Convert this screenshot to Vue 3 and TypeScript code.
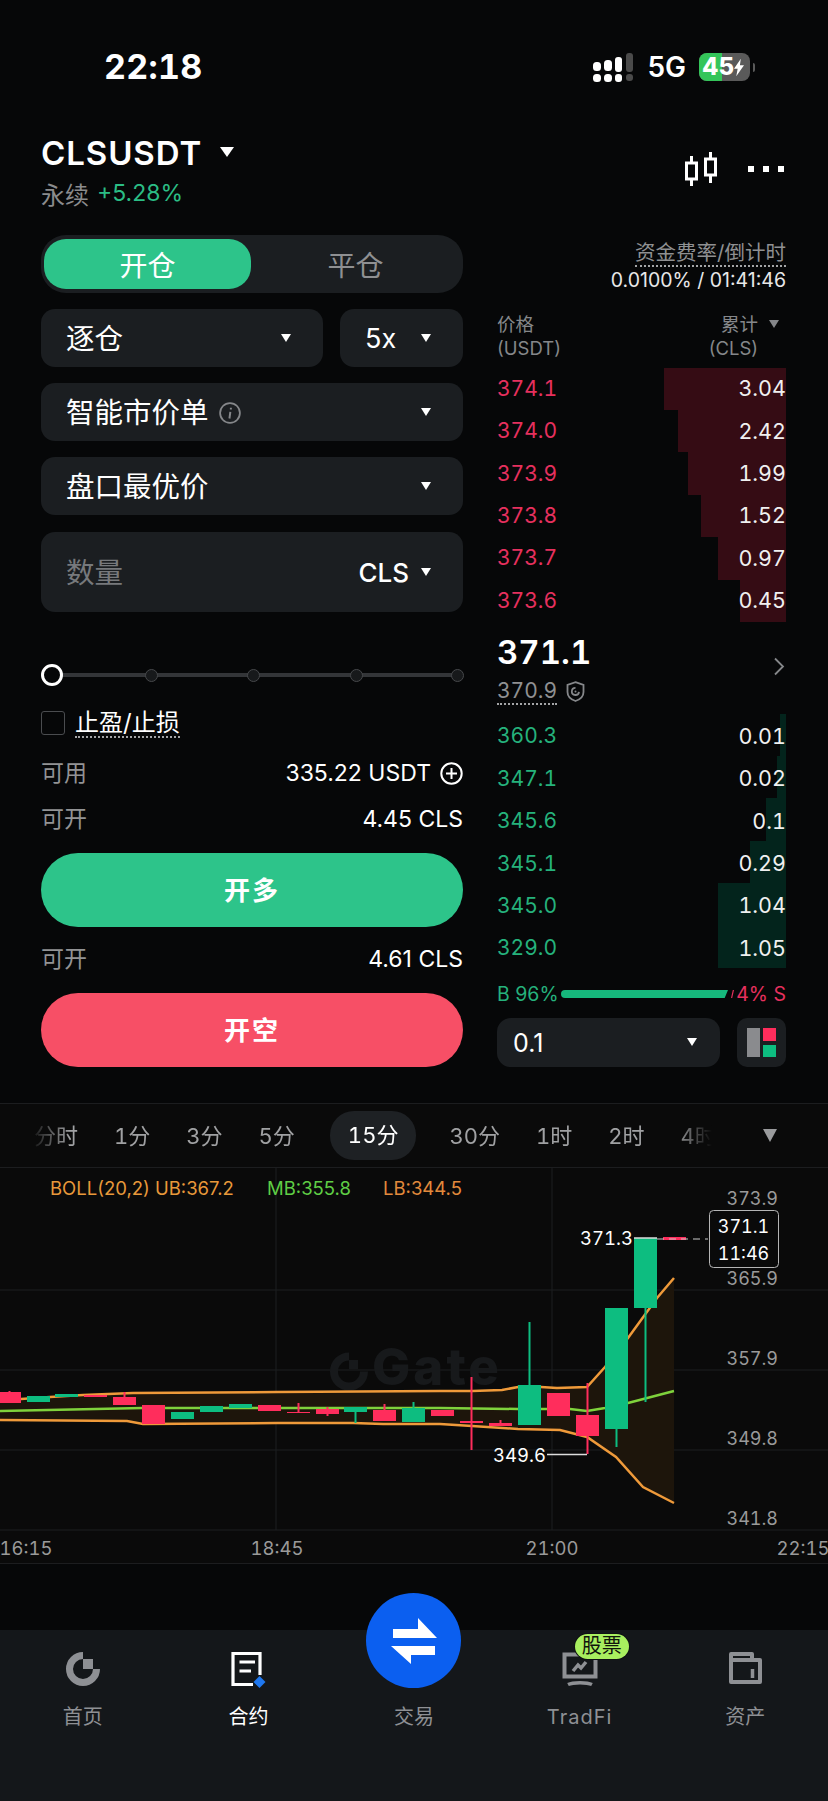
<script setup lang="ts">
interface Level { price: string; total: string; depth: number }
interface Candle { x: number; top: number; bottom: number; hi?: number; lo?: number; up: boolean }

const asks: Level[] = [
  { price: '374.1', total: '3.04', depth: 122 },
  { price: '374.0', total: '2.42', depth: 108 },
  { price: '373.9', total: '1.99', depth: 98 },
  { price: '373.8', total: '1.52', depth: 85 },
  { price: '373.7', total: '0.97', depth: 68 },
  { price: '373.6', total: '0.45', depth: 46 },
]
const bids: Level[] = [
  { price: '360.3', total: '0.01', depth: 6 },
  { price: '347.1', total: '0.02', depth: 9 },
  { price: '345.6', total: '0.1', depth: 20 },
  { price: '345.1', total: '0.29', depth: 36 },
  { price: '345.0', total: '1.04', depth: 68 },
  { price: '329.0', total: '1.05', depth: 68 },
]
const frames = ['分时', '1分', '3分', '5分', '15分', '30分', '1时', '2时', '4时']
const sliderStops = [151, 253, 356, 457]
const candles: Candle[] = [
  { x: -2, top: 1392, bottom: 1403, hi: 1391, up: false },
  { x: 27, top: 1396, bottom: 1402, up: true },
  { x: 55, top: 1394, bottom: 1397, up: true },
  { x: 84, top: 1395, bottom: 1397, up: false },
  { x: 113, top: 1397, bottom: 1405, hi: 1392, up: false },
  { x: 142, top: 1405, bottom: 1424, up: false },
  { x: 171, top: 1412, bottom: 1419, up: true },
  { x: 200, top: 1406, bottom: 1412, up: true },
  { x: 229, top: 1404, bottom: 1408, up: true },
  { x: 258, top: 1405, bottom: 1411, up: false },
  { x: 287, top: 1412, bottom: 1413, hi: 1403, up: false },
  { x: 316, top: 1409, bottom: 1414, hi: 1407, lo: 1416, up: false },
  { x: 344, top: 1407, bottom: 1412, lo: 1423, up: true },
  { x: 373, top: 1410, bottom: 1421, hi: 1404, up: false },
  { x: 402, top: 1408, bottom: 1422, hi: 1402, up: true },
  { x: 431, top: 1410, bottom: 1416, up: false },
  { x: 460, top: 1421, bottom: 1423, hi: 1377, lo: 1450, up: false },
  { x: 489, top: 1423, bottom: 1426, hi: 1420, up: false },
  { x: 518, top: 1385, bottom: 1425, hi: 1322, up: true },
  { x: 547, top: 1393, bottom: 1416, up: false },
  { x: 576, top: 1415, bottom: 1436, hi: 1383, lo: 1454, up: false },
  { x: 605, top: 1308, bottom: 1429, lo: 1447, up: true },
  { x: 634, top: 1238, bottom: 1308, lo: 1402, up: true },
  { x: 663, top: 1237, bottom: 1240, up: false },
]
const upper = '0,1400 21,1399 50,1397 83,1395 133,1393 277,1392 440,1391 472,1391 502,1390 518,1387 541,1387 557,1388 587,1387 605,1367 628,1338 657,1298 674,1278'
const middle = '0,1411 143,1408 440,1408 518,1409 570,1409 587,1411 605,1408 628,1403 674,1391'
const lower = '0,1420 127,1421 143,1424 277,1423 353,1423 383,1424 440,1424 472,1426 518,1429 560,1430 587,1437 616,1457 643,1487 674,1503'
const band = upper + ' ' + lower.split(' ').reverse().join(' ')
const axis = [
  { y: 1205, t: '373.9' }, { y: 1285, t: '365.9' }, { y: 1365, t: '357.9' },
  { y: 1445, t: '349.8' }, { y: 1525, t: '341.8' },
]
const grid = [1290, 1370, 1450, 1530]
</script>

<template>
  <div class="page">
    <div class="status">
      <span class="clock">22:18</span>
      <div class="status-right">
        <svg class="signal" width="42" height="30" viewBox="0 0 42 30">
          <rect x="1" y="10" width="8" height="9" rx="3.5" fill="#fff" />
          <rect x="12" y="8" width="8" height="11" rx="3.5" fill="#fff" />
          <rect x="23" y="5" width="7" height="15" rx="3" fill="#fff" />
          <rect x="34" y="1" width="7" height="19" rx="3" fill="#4a4a4a" />
          <rect x="1" y="22" width="8" height="8" rx="3.5" fill="#fff" />
          <rect x="12" y="22" width="8" height="8" rx="3.5" fill="#fff" />
          <rect x="23" y="22" width="7" height="8" rx="3" fill="#fff" />
          <rect x="34" y="22" width="7" height="7" rx="3" fill="#4a4a4a" />
        </svg>
        <span class="net">5G</span>
        <div class="battery">
          <span class="batt-fill"></span>
          <span class="batt-text">45</span>
          <svg class="bolt" width="10" height="19" viewBox="0 0 11 19"><path d="M7.5 0 0 11h4l-1.5 8L11 7H6.5z" fill="#fff" /></svg>
        </div>
        <span class="nub"></span>
      </div>
    </div>

    <header class="head">
      <div>
        <div class="symbol">
          <span>CLSUSDT</span>
          <i class="caret big"></i>
        </div>
        <div class="sub"><span class="perp">永续</span><span class="chg">+5.28%</span></div>
      </div>
      <div class="head-actions">
        <svg width="32" height="34" viewBox="0 0 32 34" fill="none" stroke="#fff" stroke-width="3">
          <rect x="1.5" y="11" width="10" height="16" />
          <path d="M6.5 4v7M6.5 27v7" />
          <rect x="20.5" y="7" width="10" height="16" />
          <path d="M25.5 0v7M25.5 23v8" />
        </svg>
        <div class="dots"><i></i><i></i><i></i></div>
      </div>
    </header>

    <main class="trade">
      <section class="form">
        <div class="seg">
          <span class="seg-item on">开仓</span>
          <span class="seg-item">平仓</span>
        </div>
        <div class="two">
          <div class="box grow"><span>逐仓</span><i class="caret"></i></div>
          <div class="box lev"><span>5x</span><i class="caret"></i></div>
        </div>
        <div class="box">
          <span class="with-info">智能市价单
            <svg width="22" height="22" viewBox="0 0 20 20" fill="none">
              <circle cx="10" cy="10" r="9" stroke="#85878a" stroke-width="1.6" />
              <path d="M10.8 5.2v1.600M10.300 9l-.8 6" stroke="#85878a" stroke-width="1.8" />
            </svg>
          </span>
          <i class="caret"></i>
        </div>
        <div class="box"><span>盘口最优价</span><i class="caret"></i></div>
        <div class="box qty">
          <span class="ph">数量</span>
          <span class="unit">CLS<i class="caret"></i></span>
        </div>

        <div class="slider">
          <span class="knob"></span>
          <span v-for="s in sliderStops" :key="s" class="stop" :style="{ left: s - 41 + 'px' }"></span>
        </div>

        <label class="tpsl"><i class="check"></i><span class="dotted">止盈/止损</span></label>

        <div class="info first"><span class="k">可用</span>
          <span class="v">335.22 USDT
            <svg width="23" height="23" viewBox="0 0 23 23" fill="none" stroke="#fff" stroke-width="2">
              <circle cx="11.5" cy="11.5" r="10.2" /><path d="M11.5 6v11M6 11.5h11" />
            </svg>
          </span>
        </div>
        <div class="info second"><span class="k">可开</span><span class="v">4.45 CLS</span></div>
        <button class="cta long">开多</button>
        <div class="info third"><span class="k">可开</span><span class="v">4.61 CLS</span></div>
        <button class="cta short">开空</button>
      </section>

      <section class="book">
        <div class="funding">
          <div><span class="dotted gray fund-title">资金费率/倒计时</span></div>
          <div class="rate">0.0100% / 01:41:46</div>
        </div>
        <div class="book-head">
          <div>
            <div>价格</div>
            <div>(USDT)</div>
          </div>
          <div class="right">
            <div class="right-top">累计<i class="caret small"></i></div>
            <div class="cls">(CLS)</div>
          </div>
        </div>
        <div class="levels asks">
          <div v-for="l in asks" :key="l.price" class="level">
            <i class="depth" :style="{ width: l.depth + 'px' }"></i>
            <span class="p">{{ l.price }}</span><span class="t">{{ l.total }}</span>
          </div>
        </div>
        <div class="mid">
          <div>
            <div class="last">371.1</div>
            <div class="mark">
              <span class="dotted gray">370.9</span>
              <svg width="19" height="21" viewBox="0 0 19 21" fill="none" stroke="#85878a" stroke-width="1.8">
                <path d="M9.5 1.2 17.5 4v7c0 4.500-3.500 7.500-8 9-4.500-1.500-8-4.500-8-9V4z" />
                <path d="M13 10.800a3.600 3.600 0 1 1-3.500-4" />
                <circle cx="9.500" cy="10.500" r="1" fill="#85878a" stroke="none" />
              </svg>
            </div>
          </div>
          <svg width="12" height="19" viewBox="0 0 12 19" fill="none" stroke="#85878a" stroke-width="1.800"><path d="m2 1.500 8 8-8 8" /></svg>
        </div>
        <div class="levels bids">
          <div v-for="l in bids" :key="l.price" class="level">
            <i class="depth" :style="{ width: l.depth + 'px' }"></i>
            <span class="p">{{ l.price }}</span><span class="t">{{ l.total }}</span>
          </div>
        </div>
        <div class="ratio">
          <span class="b">B 96%</span>
          <i class="bar-b"></i>
          <i class="bar-s"></i>
          <span class="s">4% S</span>
        </div>
        <div class="book-foot">
          <div class="box tick"><span>0.1</span><i class="caret"></i></div>
          <div class="layout">
            <i class="l-gray"></i>
            <div class="l-col"><i class="l-red"></i><i class="l-green"></i></div>
          </div>
        </div>
      </section>
    </main>

    <div class="frames">
      <div class="frame-scroll">
        <span v-for="f in frames" :key="f" class="frame" :class="{ active: f === '15分' }">{{ f }}</span>
      </div>
      <i class="caret frame-caret"></i>
    </div>

    <div class="chart">
      <svg width="828" height="395" viewBox="0 1168 828 395">
        <g stroke="#1d1e20" stroke-width="1">
          <line v-for="y in grid" :key="y" x1="0" x2="828" :y1="y" :y2="y" />
          <line x1="276" x2="276" y1="1168" y2="1530" />
          <line x1="552" x2="552" y1="1168" y2="1530" />
        </g>
        <g fill="#17191b">
          <path d="M349 1356.500A15 15 0 1 0 364 1371.500" fill="none" stroke="#17191b" stroke-width="8" />
          <rect x="349" y="1360" width="9" height="9" />
          <text x="372" y="1385" class="wm">Gate</text>
        </g>
        <polygon :points="band" fill="#1d150b" />
        <polyline :points="upper" class="ln orange" />
        <polyline :points="middle" class="ln green" />
        <polyline :points="lower" class="ln orange" />
        <g v-for="c in candles" :key="c.x" :fill="c.up ? '#0dbd80' : '#ff2d5c'" :stroke="c.up ? '#0dbd80' : '#ff2d5c'">
          <line v-if="c.hi || c.lo" :x1="c.x + 11.500" :x2="c.x + 11.500" :y1="c.hi ?? c.top" :y2="c.lo ?? c.bottom" stroke-width="2" />
          <rect :x="c.x" :y="c.top" width="23" :height="c.bottom - c.top" stroke="none" />
        </g>
        <text x="50" y="1195" class="leg" fill="#e8993a">BOLL(20,2) UB:367.2</text>
        <text x="267" y="1195" class="leg" fill="#5fce45">MB:355.8</text>
        <text x="383" y="1195" class="leg" fill="#e28a3c">LB:344.5</text>
        <text v-for="a in axis" :key="a.t" x="778" :y="a.y" class="axis" text-anchor="end">{{ a.t }}</text>
        <text x="26" y="1555" class="axis time" text-anchor="middle">16:15</text>
        <text x="277" y="1555" class="axis time" text-anchor="middle">18:45</text>
        <text x="552" y="1555" class="axis time" text-anchor="middle">21:00</text>
        <text x="803" y="1555" class="axis time" text-anchor="middle">22:15</text>
        <line x1="547" x2="587" y1="1454.500" y2="1454.500" stroke="#ddd" stroke-width="1.500" />
        <text x="546" y="1462" class="tag" text-anchor="end">349.6</text>
        <line x1="634" x2="657" y1="1238" y2="1238" stroke="#ddd" stroke-width="1.500" />
        <text x="633" y="1245" class="tag" text-anchor="end">371.3</text>
        <line x1="657" x2="708" y1="1239" y2="1239" stroke="#c9c9c9" stroke-width="1.200" stroke-dasharray="7 5" />
        <rect x="709.500" y="1210.500" width="69" height="57" rx="4" fill="#0a0a0a" stroke="#b5b5b5" />
        <text x="743.500" y="1233" class="tag box-t" text-anchor="middle">371.1</text>
        <text x="743.500" y="1260" class="tag box-t" text-anchor="middle">11:46</text>
      </svg>
    </div>

    <nav class="nav">
      <div class="tab">
        <svg class="ic" width="40" height="40" viewBox="0 0 40 40" fill="none">
          <path d="M20 7.500A13.500 13.500 0 1 0 33.500 21" stroke="#8e9094" stroke-width="7" />
          <rect x="20" y="11" width="10" height="10" fill="#8e9094" />
        </svg>
        <span>首页</span>
      </div>
      <div class="tab on">
        <svg class="ic" width="40" height="40" viewBox="0 0 40 40" fill="none" stroke="#fff">
          <path d="M32 27V5.500H5v31h20" stroke-width="3.200" />
          <path d="M11.500 14H27M11.500 23H23" stroke-width="3" />
          <path d="M31.500 28l6 6-6 6-6-6z" fill="#1f78f0" stroke="none" />
        </svg>
        <span>合约</span>
      </div>
      <div class="tab">
        <span class="fab">
          <svg width="48" height="48" viewBox="0 0 48 48" fill="#fff">
            <path d="M3 12h25V1l19 20H3zM1 29h44v9H21v9z" />
          </svg>
        </span>
        <span class="ic-space"></span>
        <span>交易</span>
      </div>
      <div class="tab">
        <svg class="ic" width="40" height="40" viewBox="0 0 40 40" fill="none" stroke="#8e9094">
          <rect x="4.500" y="6.500" width="31" height="22" stroke-width="4" />
          <path d="M13 23l5-6 3 3 5-6" stroke-width="3.500" />
          <path d="M8 36.500c5-2.500 19-2.500 24 0" stroke-width="3.500" />
        </svg>
        <span class="tag-pill">股票</span>
        <span class="latin">TradFi</span>
      </div>
      <div class="tab">
        <svg class="ic" width="40" height="40" viewBox="0 0 40 40" fill="none" stroke="#8e9094" stroke-width="4">
          <path d="M6 12V6h21v6M6 12h29v22H6z" stroke-linejoin="round" />
          <path d="M27.500 21v9" stroke-width="3.500" />
        </svg>
        <span>资产</span>
      </div>
    </nav>
  </div>
</template>

<style>
html, body { margin: 0; background: #060708; }
</style>

<style scoped>
* { box-sizing: border-box; }
.page {
  width: 828px; height: 1801px; overflow: hidden; display: flex; flex-direction: column;
  background: #060708; color: #fff;
  font-family: Inter, "Noto Sans CJK SC", "Noto Sans", sans-serif;
}
i { display: block; font-style: normal; }

.status { height: 84px; padding: 50px 0 0 104px; display: flex; justify-content: space-between; }
.clock { font-size: 34px; line-height: 34px; font-weight: 700; letter-spacing: .3px; font-variant-numeric: tabular-nums; }
.status-right { display: flex; align-items: center; height: 34px; margin-right: 73px; }
.net { font-size: 28px; font-weight: 600; margin-left: 13px; line-height: 34px; }
.battery {
  position: relative; width: 51px; height: 28px; margin-left: 13px; border-radius: 8px;
  background: #5a5a5a; overflow: hidden; display: flex; align-items: center; padding-left: 3px;
}
.batt-fill { position: absolute; left: 0; top: 0; bottom: 0; width: 23px; background: #34c55a; }
.batt-text { position: relative; font-size: 24px; font-weight: 800; line-height: 28px; }
.bolt { position: relative; margin-left: 0; }
.nub { width: 2px; height: 9px; margin-left: 3px; background: #5a5a5a; border-radius: 0 2px 2px 0; }

.caret { width: 0; height: 0; border-style: solid; border-width: 8px 5.5px 0; border-color: #fff transparent transparent; }
.caret.big { border-width: 10px 7px 0; margin-left: 18px; margin-top: -2px; }
.caret.small { border-width: 8px 5px 0; border-top-color: #85878a; margin-left: 11px; }

.head { margin-top: 52px; padding: 0 44px 0 41px; display: flex; justify-content: space-between; height: 73px; }
.symbol { display: flex; align-items: center; height: 34px; font-size: 33px; font-weight: 600; letter-spacing: .9px; }
.sub { display: flex; align-items: center; height: 28px; margin-top: 9px; font-size: 24px; }
.perp { color: #8a8b8d; }
.chg { color: #2bbd85; margin-left: 8px; font-size: 23px; }
.head-actions { display: flex; align-items: flex-start; gap: 31px; padding-top: 16px; }
.dots { display: flex; gap: 9px; padding-top: 14px; }
.dots i { width: 6px; height: 6px; background: #fff; }

.trade { margin-top: 26px; padding-left: 41px; display: flex; gap: 34px; height: 832px; }
.form { width: 422px; display: flex; flex-direction: column; }
.seg { height: 58px; border-radius: 25px; background: #1b1e21; padding: 4px 3px; display: flex; }
.seg-item { width: 207px; display: flex; align-items: center; justify-content: center; font-size: 28px; color: #8f9092; border-radius: 22px; }
.seg-item:last-child { flex: 1; }
.seg-item.on { background: #2dc48a; color: #fff; }
.two { display: flex; gap: 17px; margin-top: 16px; }
.box {
  height: 58px; margin-top: 16px; border-radius: 14px; background: #1b1e21; padding: 2px 32px 0 25px;
  display: flex; align-items: center; justify-content: space-between; font-size: 28.500px; line-height: 34px;
}
.box .caret { margin-top: -2px; }
.two .box { margin-top: 0; }
.grow { width: 282px; padding-left: 25px; }
.lev { flex: 1; padding-right: 32px; font-size: 27px; }
.with-info { display: flex; align-items: center; gap: 10px; }
.box.qty { height: 81px; margin-top: 17px; }
.ph { color: #77797c; }
.unit { display: flex; align-items: center; gap: 12px; font-size: 26px; font-weight: 500; }
.slider { position: relative; height: 4px; margin: 61px 6px 0 11px; background: #333538; }
.knob { position: absolute; left: -11px; top: -9px; width: 22px; height: 22px; border-radius: 50%; border: 3.500px solid #fff; background: #060708; }
.stop { position: absolute; top: -4.500px; width: 13px; height: 13px; margin-left: -17.500px; border-radius: 50%; border: 1.500px solid #46484b; background: #17191b; }
.tpsl { display: flex; align-items: center; gap: 10px; height: 30px; margin-top: 31px; font-size: 24px; }
.check { width: 24px; height: 24px; border: 1.500px solid #4a4c4f; border-radius: 3px; }
.dotted { display: inline-block; line-height: 1.15; border-bottom: 2px dotted #a4a5a7; }
.info { display: flex; align-items: center; justify-content: space-between; height: 30px; font-size: 23px; }
.info.first { margin-top: 20px; }
.info.second { margin-top: 16px; }
.info.third { margin-top: 17px; }
.k { color: #929395; margin-top: -4px; }
.v { display: flex; align-items: center; gap: 9px; }
.cta { height: 74px; margin-top: 19px; padding-bottom: 4px; border: 0; border-radius: 37px; color: #fff; font: 600 26px Inter, "Noto Sans CJK SC", sans-serif; letter-spacing: 2px; }
.long { background: #2dc48a; }
.short { background: #f74f66; }

.book { width: 289px; display: flex; flex-direction: column; }
.funding { padding-top: 5px; text-align: right; font-size: 19.500px; line-height: 26px; }
.fund-title { font-size: 20.500px; }
.gray { color: #8f9092; }
.rate { color: #e8e8e8; }
.book-head { display: flex; justify-content: space-between; height: 48px; margin-top: 19px; font-size: 18.500px; line-height: 24px; color: #85878a; }
.book-head .right { text-align: right; padding-right: 7px; }
.right-top { display: flex; align-items: center; justify-content: flex-end; }
.book-head .cls { padding-right: 21px; }
.levels { margin-top: 8px; display: flex; flex-direction: column; }
.bids { margin-top: 0; }
.level { position: relative; height: 42.400px; display: flex; align-items: center; justify-content: space-between; font-size: 21.500px; font-variant-numeric: tabular-nums; }
.asks .level { padding-bottom: 1px; }
.bids .level { padding-top: 2px; }
.depth { position: absolute; right: 0; top: 0; bottom: 0; }
.asks .depth { background: #350c14; }
.bids .depth { background: #03241c; }
.asks .p { color: #e6305e; position: relative; font-size: 21px; }
.bids .p { color: #25b27c; position: relative; font-size: 21px; }
.t { position: relative; color: #f0f0f0; }
.mid { height: 92.600px; display: flex; justify-content: space-between; align-items: center; }
.last { font-size: 33px; line-height: 42px; font-weight: 600; margin-top: 0; font-variant-numeric: tabular-nums; }
.mark { display: flex; align-items: center; gap: 9px; font-size: 21px; margin-top: 6px; font-variant-numeric: tabular-nums; }
.mid > svg { margin-right: 1px; margin-top: -2px; }
.ratio { display: flex; align-items: center; height: 24px; margin-top: 14px; font-size: 19.500px; }
.b { color: #25b27c; width: 64px; }
.s { color: #e6305e; margin-left: auto; }
.bar-b { width: 167px; height: 8px; background: #16b87c; border-radius: 4px 0 0 4px; clip-path: polygon(0 0, 100% 0, 98% 100%, 0 100%); }
.bar-s { width: 3px; height: 8px; margin-left: 3px; background: #e6305e; clip-path: polygon(60% 0, 100% 0, 40% 100%, 0 100%); }
.book-foot { display: flex; justify-content: space-between; margin-top: 12px; }
.box.tick { margin: 0; width: 223px; height: 49px; padding: 0 23px 0 16px; font-size: 25px; }
.layout { width: 49px; height: 49px; border-radius: 10px; background: #1b1e21; padding: 10px; display: flex; gap: 3px; }
.l-gray { width: 13px; background: #8a8b8e; }
.l-col { flex: 1; display: flex; flex-direction: column; gap: 4px; }
.l-col i { flex: 1; }
.l-red { background: #ff2d5c; }
.l-green { background: #0dbd80; }

.frames {
  margin-top: 36px; height: 65px; flex: none; display: flex; align-items: center; background: #0a0a0a;
  border-top: 1px solid #1c1d1f; border-bottom: 1px solid #1c1d1f;
}
.frame-scroll {
  width: 712px; height: 100%; display: flex; align-items: center; gap: 36px; overflow: hidden; padding-left: 34px;
  -webkit-mask-image: linear-gradient(to right, transparent 30px, #000 70px, #000 675px, transparent 712px);
  mask-image: linear-gradient(to right, transparent 30px, #000 70px, #000 675px, transparent 712px);
  font-variant-numeric: tabular-nums;
}
.frame { flex: none; font-size: 22px; color: #a0a1a3; line-height: 30px; }
.frame.active { color: #fff; background: #1e2124; height: 49px; line-height: 49px; padding: 0 18px; border-radius: 24px; margin: 0 -3px 0 -1px; }
.frame-caret { margin-left: 51px; border-width: 13px 7.500px 0; border-top-color: #9a9b9d; }

.chart { height: 396px; flex: none; background: #0a0a0a; border-bottom: 1px solid #1c1d1f; }
.chart svg { display: block; }
.wm { font-size: 51px; font-weight: 800; letter-spacing: 3px; }
.ln { fill: none; stroke-width: 2.500; }
.orange { stroke: #ef9a3a; }
.green { stroke: #7fd23c; }
.leg { font-size: 18.500px; }
.axis { font-size: 18px; fill: #9a9a9a; font-variant-numeric: tabular-nums; }
.axis.time { font-size: 18.500px; }
.tag { font-size: 18.500px; fill: #fff; font-variant-numeric: tabular-nums; }
.box-t { font-size: 18px; }

.nav { flex: 1; margin-top: 66px; background: #14171a; display: flex; position: relative; align-items: flex-start; }
.tab { flex: 1; display: flex; flex-direction: column; align-items: center; position: relative; padding-top: 18px; font-size: 20px; line-height: 28px; color: #8e9094; }
.tab.on { color: #fff; }
.ic, .ic-space { display: block; width: 40px; height: 40px; margin-bottom: 15px; }
.fab {
  position: absolute; left: 50%; top: -37px; width: 95px; height: 95px; margin-left: -47.500px;
  border-radius: 50%; background: #0b5ff0; display: flex; align-items: center; justify-content: center;
}
.tag-pill {
  position: absolute; left: 78px; top: 4px; width: 54px; height: 25px; border-radius: 13px;
  background: #a8ef5f; color: #10140c; font-size: 20px; line-height: 24px; text-align: center; box-shadow: 0 0 0 1px #0f1214;
}
.latin { letter-spacing: 1px; }
</style>
